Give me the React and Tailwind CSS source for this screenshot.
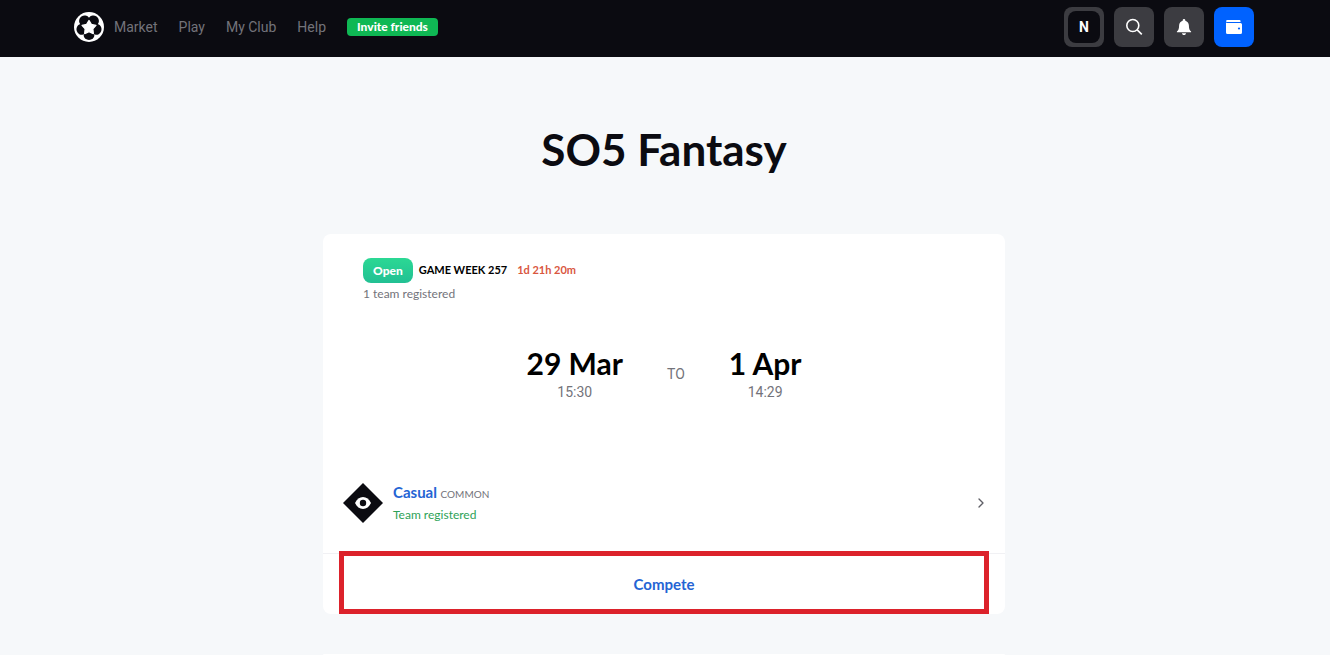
import { ChevronRight } from 'lucide-react';

const navLinks = ['Market', 'Play', 'My Club', 'Help'];

const BallLogo = () => (
  <svg viewBox="0 0 30 30" className="size-[30px]" aria-hidden="true">
    <circle cx="15" cy="15" r="15" fill="#fff" />
    <circle cx="15" cy="15" r="9" fill="#0b0b11" />
    <g fill="#0b0b11">
      {[36, 108, 180, 252, 324].map((angle) => (
        <ellipse key={angle} cx="15" cy="7" rx="5.4" ry="4.9" transform={`rotate(${angle} 15 15)`} />
      ))}
    </g>
    <path
      d="M15 8.500l2.300 3.900 4.600 1-3.100 3.500.5 4.600-4.300-1.900-4.300 1.900.5-4.600-3.100-3.500 4.600-1z"
      fill="#fff"
      stroke="#fff"
      strokeWidth="1.400"
      strokeLinejoin="round"
    />
  </svg>
);

const SearchIcon = () => (
  <svg viewBox="0 0 20 20" className="size-5" fill="none" stroke="#fff" strokeWidth="1.6" aria-hidden="true">
    <circle cx="8.8" cy="8.5" r="6" />
    <path d="M13.2 12.9l4.6 4.5" />
  </svg>
);

const BellIcon = () => (
  <svg viewBox="0 0 20 20" className="size-5" fill="#fff" aria-hidden="true">
    <path d="M10 2c.8 0 1.3.6 1.3 1.3v.4c2.200.6 3.600 2.400 3.600 4.900 0 3.200.6 4.600 2.200 5.900v.7H2.900v-.7c1.600-1.300 2.200-2.700 2.200-5.900 0-2.500 1.400-4.300 3.600-4.900v-.4C8.700 2.600 9.200 2 10 2z" />
    <path d="M8 16.200h4c0 1.100-.9 1.800-2 1.800s-2-.7-2-1.800z" />
  </svg>
);

const WalletIcon = () => (
  <svg viewBox="0 0 20 20" className="size-5" aria-hidden="true">
    <path d="M4 3h11.500a1 1 0 0 1 1 1v1H3.800C2.500 5 2 4.600 2 4.300 2 3.500 2.900 3 4 3z" fill="#fff" />
    <path
      d="M2 5.400c.5.400 1.100.6 1.800.6H16.500A1.500 1.500 0 0 1 18 7.500v8a1.500 1.500 0 0 1-1.500 1.500h-13A1.500 1.500 0 0 1 2 15.500z"
      fill="#fff"
    />
    <circle cx="15" cy="11.500" r="1.100" fill="#0062ff" />
  </svg>
);

const EyeDiamond = () => (
  <svg viewBox="0 0 40 40" className="size-10 shrink-0" aria-hidden="true">
    <path d="M20 0l20 20-20 20L0 20z" fill="#0b0b11" />
    <path d="M12 20c1.800-3.800 4.600-6 8-6s6.200 2.200 8 6c-1.800 3.800-4.600 6-8 6s-6.200-2.200-8-6z" fill="#fff" />
    <circle cx="20" cy="20" r="3.200" fill="#0b0b11" />
  </svg>
);

const IconButton = ({ label, className, children }) => (
  <button
    type="button"
    aria-label={label}
    className={`flex size-10 items-center justify-center rounded-lg ${className}`}
  >
    {children}
  </button>
);

const Header = () => (
  <header className="bg-[#0b0b11] pr-0.5">
    <div className="mx-auto flex max-w-[1180px] items-center justify-between pt-[7px] pb-2.5">
      <nav className="flex items-center gap-[21px] font-[Roboto,sans-serif] text-[14px] text-[#73737a]">
        <div className="flex items-center gap-2.5">
          <a href="#home" aria-label="Home">
            <BallLogo />
          </a>
          <a href="#market">{navLinks[0]}</a>
        </div>
        {navLinks.slice(1).map((link) => (
          <a key={link} href="#nav">
            {link}
          </a>
        ))}
        <button
          type="button"
          className="h-[18px] rounded bg-[#0fb854] px-2.5 font-[Lato,sans-serif] text-[12px] leading-[18px] font-black text-white"
        >
          Invite friends
        </button>
      </nav>
      <div className="flex gap-2.5">
        <IconButton label="Profile" className="bg-[#3c3c41]">
          <span className="flex size-8 items-center justify-center rounded-lg bg-[#0b0b11] font-[Roboto,sans-serif] text-[14px] font-bold text-white">
            N
          </span>
        </IconButton>
        <IconButton label="Search" className="bg-[#3c3c41]">
          <SearchIcon />
        </IconButton>
        <IconButton label="Notifications" className="bg-[#3c3c41]">
          <BellIcon />
        </IconButton>
        <IconButton label="Wallet" className="bg-[#0062ff]">
          <WalletIcon />
        </IconButton>
      </div>
    </div>
  </header>
);

const DateBlock = ({ day, time }) => (
  <div className="text-center">
    <p className="font-[Lato,sans-serif] text-[30px] leading-10 font-bold text-black">{day}</p>
    <p className="text-[14px] leading-[18px] text-[#73737a]">{time}</p>
  </div>
);

const GameWeekCard = () => (
  <section className="rounded-lg bg-white">
    <div className="px-10 pt-6">
      <div className="flex items-center text-[11px]">
        <span className="rounded-lg bg-linear-to-b from-[#2bd894] to-[#22c093] px-2.5 text-[12px] leading-[25px] font-black text-white">
          Open
        </span>
        <h2 className="ml-1.5 font-bold text-black">GAME WEEK 257</h2>
        <span className="ml-2.5 font-bold text-[#d9573f]">1d 21h 20m</span>
      </div>
      <p className="mt-[3px] text-[12px] leading-4 text-[#73737a]">1 team registered</p>
    </div>

    <div className="mt-[41px] flex items-center justify-center gap-11 font-[Roboto,sans-serif]">
      <DateBlock day="29 Mar" time="15:30" />
      <span className="pt-1 text-[14px] text-[#73737a]">TO</span>
      <DateBlock day="1 Apr" time="14:29" />
    </div>

    <a href="#casual" className="mt-20 flex items-center gap-2.5 pr-4 pb-7 pl-5">
      <EyeDiamond />
      <div className="flex-1">
        <p className="text-[15px] leading-[22px] font-bold text-[#2464d4]">
          Casual <span className="text-[10px] font-normal text-[#73737a]">COMMON</span>
        </p>
        <p className="text-[12px] leading-5 text-[#2da257]">Team registered</p>
      </div>
      <ChevronRight className="size-4 text-[#5f5f66]" />
    </a>

    <div className="relative border-t border-[#f1f1f4]">
      <button type="button" className="h-[60px] w-full text-[15px] font-bold text-[#2464d4]">
        Compete
      </button>
      <span className="pointer-events-none absolute inset-x-4 -top-[3px] bottom-0 border-[5px] border-[#dc222b]" />
    </div>
  </section>
);

const App = () => (
  <div className="flex min-h-screen flex-col bg-[#f6f8fa] font-[Lato,sans-serif]">
    <Header />
    <main className="flex flex-1 flex-col pr-0.5">
      <h1 className="pt-[62px] pb-[55px] text-center text-[44px] leading-[60px] font-bold text-[#0b0b11]">
        SO5 Fantasy
      </h1>
      <div className="mx-auto flex w-full max-w-[682px] flex-1 flex-col gap-10">
        <GameWeekCard />
        <section className="flex-1 rounded-t-lg bg-white" />
      </div>
    </main>
  </div>
);

export default App;
